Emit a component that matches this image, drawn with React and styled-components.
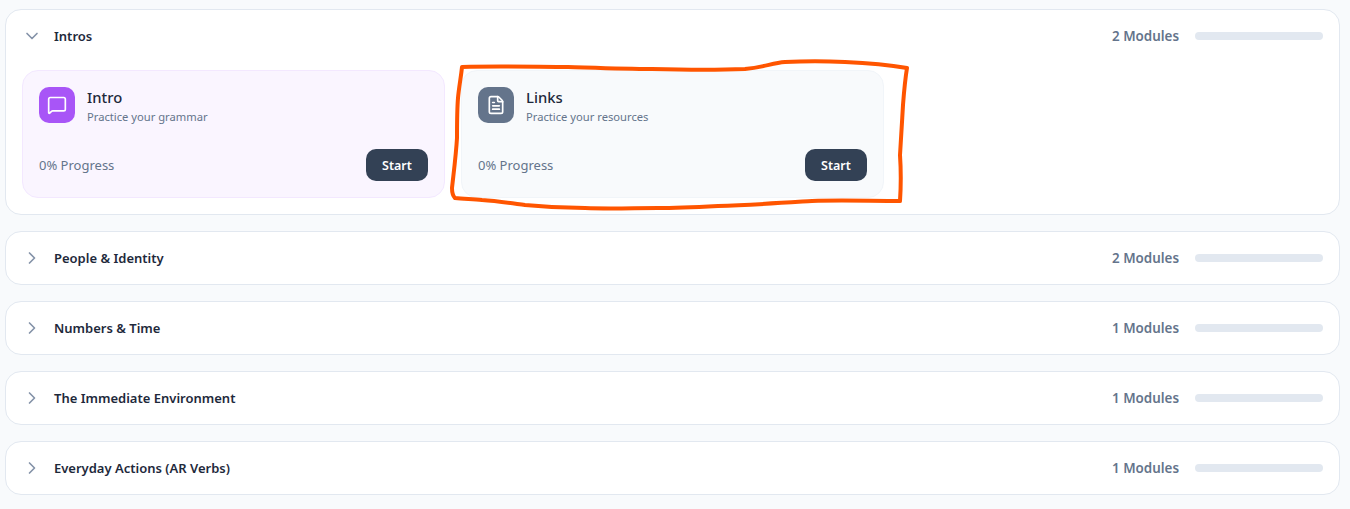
import styled, { createGlobalStyle } from 'styled-components';
import { ChevronDown, ChevronRight, MessageSquare, FileText } from 'lucide-react';

const GlobalStyle = createGlobalStyle`
  html, body {
    margin: 0;
    background: #f8fafc;
    font-family: "Noto Sans", "Open Sans", sans-serif;
    color: #1e293b;
  }
  * {
    box-sizing: border-box;
  }
`;

const Page = styled.div`
  position: relative;
  display: flex;
  flex-direction: column;
  gap: 16px;
  height: 509px;
  overflow: hidden;
  padding: 9px 10px 0 5px;
`;

const Section = styled.section`
  background: #fff;
  border: 1px solid #e2e8f0;
  border-radius: 16px;
`;

const Header = styled.div`
  display: flex;
  align-items: center;
  height: 52px;
  padding: 0 16px;
`;

const Chevron = styled.span`
  display: flex;
  width: 20px;
  margin-right: 12px;
  color: #8492a8;
`;

const Title = styled.span`
  flex: 1;
  font-size: 13px;
  font-weight: 600;
  color: #1e293b;
`;

const Count = styled.span`
  margin-right: 16px;
  font-size: 13.4px;
  font-weight: 600;
  color: #64748b;
`;

const Bar = styled.div`
  width: 128px;
  height: 8px;
  border-radius: 4px;
  background: #e2e8f0;
`;

const Grid = styled.div`
  display: grid;
  grid-template-columns: repeat(3, 1fr);
  gap: 16px;
  padding: 8px 16px 16px;
`;

const Card = styled.div`
  display: flex;
  flex-direction: column;
  justify-content: space-between;
  height: 128px;
  padding: 16px;
  border: 1px solid ${({ $tint }) => ($tint === 'purple' ? '#f3e8ff' : '#f1f5f9')};
  border-radius: 16px;
  background: ${({ $tint }) => ($tint === 'purple' ? '#faf5ff' : '#f8fafc')};
`;

const CardTop = styled.div`
  display: flex;
  gap: 12px;
`;

const Tile = styled.div`
  display: flex;
  align-items: center;
  justify-content: center;
  width: 36px;
  height: 36px;
  border-radius: 10px;
  color: #fff;
  background: ${({ $tint }) => ($tint === 'purple' ? '#a855f7' : '#64748b')};
`;

const CardInfo = styled.div`
  display: flex;
  flex-direction: column;
`;

const CardName = styled.span`
  font-size: 14.8px;
  font-weight: 500;
  line-height: 20px;
  color: #1e293b;
`;

const CardDesc = styled.span`
  font-size: 11.2px;
  line-height: 20px;
  color: #64748b;
`;

const CardBottom = styled.div`
  display: flex;
  align-items: center;
  justify-content: space-between;
`;

const Progress = styled.span`
  font-size: 13px;
  color: #64748b;
`;

const StartButton = styled.button`
  width: 62px;
  height: 32px;
  border: 0;
  border-radius: 10px;
  background: #334155;
  color: #fff;
  font: 600 12.5px "Noto Sans", sans-serif;
  cursor: pointer;
`;

const Scribble = styled.svg`
  position: absolute;
  top: 0;
  left: 0;
  pointer-events: none;
`;

const modules = [
  { name: 'Intro', desc: 'Practice your grammar', tint: 'purple', Icon: MessageSquare },
  { name: 'Links', desc: 'Practice your resources', tint: 'slate', Icon: FileText },
];

const closed = [
  { title: 'People & Identity', count: 2 },
  { title: 'Numbers & Time', count: 1 },
  { title: 'The Immediate Environment', count: 1 },
  { title: 'Everyday Actions (AR Verbs)', count: 1 },
];

const App = () => {
  return (
    <Page>
      <GlobalStyle />
      <Section>
        <Header>
          <Chevron><ChevronDown size={20} strokeWidth={2} /></Chevron>
          <Title>Intros</Title>
          <Count>2 Modules</Count>
          <Bar />
        </Header>
        <Grid>
          {modules.map(({ name, desc, tint, Icon }) => (
            <Card key={name} $tint={tint}>
              <CardTop>
                <Tile $tint={tint}><Icon size={20} strokeWidth={2} /></Tile>
                <CardInfo>
                  <CardName>{name}</CardName>
                  <CardDesc>{desc}</CardDesc>
                </CardInfo>
              </CardTop>
              <CardBottom>
                <Progress>0% Progress</Progress>
                <StartButton>Start</StartButton>
              </CardBottom>
            </Card>
          ))}
        </Grid>
      </Section>
      {closed.map(({ title, count }) => (
        <Section key={title}>
          <Header>
            <Chevron><ChevronRight size={20} strokeWidth={2} /></Chevron>
            <Title>{title}</Title>
            <Count>{count} Modules</Count>
            <Bar />
          </Header>
        </Section>
      ))}
      <Scribble width="1350" height="509" fill="none">
        <path
          d="M462 67 C500 66 540 67 568 67 C600 68 625 69 652 69 C690 70 720 70 745 69 C765 67 772 63 785 62 C805 61 825 61 845 62 C870 63 890 65 907 68 C905 80 904 92 903 105 C902 122 901 140 900 155 C901 170 901 186 900 201 C870 201 840 200 812 201 C780 203 750 205 718 206 C698 207 678 208 658 208 C634 208 610 209 585 208 C565 208 545 207 525 205 C510 203 497 201 482 200 C472 199 463 199 455 198 C452 195 452 192 452 188 C454 170 456 155 457 138 C457 124 457 110 458 98 C459 87 461 77 462 67 Z"
          stroke="#ff5500"
          strokeWidth="4"
          strokeLinejoin="round"
        />
      </Scribble>
    </Page>
  );
};

export default App;
